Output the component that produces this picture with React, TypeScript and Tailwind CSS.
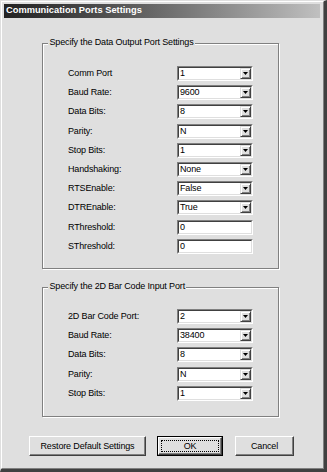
import React from "react";

const txt = "font-['Liberation_Sans',Arial,sans-serif] text-[9px] tracking-[-0.15px] text-black leading-none";

type Field = { label: string; value: string; kind?: "combo" | "text" };

const outputPort: Field[] = [
  { label: "Comm Port", value: "1" },
  { label: "Baud Rate:", value: "9600" },
  { label: "Data Bits:", value: "8" },
  { label: "Parity:", value: "N" },
  { label: "Stop Bits:", value: "1" },
  { label: "Handshaking:", value: "None" },
  { label: "RTSEnable:", value: "False" },
  { label: "DTREnable:", value: "True" },
  { label: "RThreshold:", value: "0", kind: "text" },
  { label: "SThreshold:", value: "0", kind: "text" },
];

const inputPort: Field[] = [
  { label: "2D Bar Code Port:", value: "2" },
  { label: "Baud Rate:", value: "38400" },
  { label: "Data Bits:", value: "8" },
  { label: "Parity:", value: "N" },
  { label: "Stop Bits:", value: "1" },
];

function Sunken({ value, combo }: { value: string; combo: boolean }) {
  return (
    <div className="flex h-[15px] w-[76px] border border-t-[#808080] border-l-[#808080] border-r-white border-b-white">
      <div className="flex flex-1 border border-t-[#404040] border-l-[#404040] border-r-[#dfdfdf] border-b-[#dfdfdf] bg-white">
        <span className={`${txt} flex flex-1 items-center pl-[1px]`}>{value}</span>
        {combo && (
          <div className="flex w-[11px] items-center justify-center border border-t-[#dfdfdf] border-l-[#dfdfdf] border-r-[#404040] border-b-[#404040] bg-[#dfdfdf] shadow-[inset_1px_1px_0_#fff,inset_-1px_-1px_0_#808080]">
            <svg width="5" height="3" viewBox="0 0 5 3">
              <polygon points="0,0 5,0 2.5,3" fill="#000" />
            </svg>
          </div>
        )}
      </div>
    </div>
  );
}

function GroupBox({ title, fields, height, padTop }: { title: string; fields: Field[]; height: string; padTop: string }) {
  return (
    <div
      className={`relative ml-[38px] w-[237px] ${height} border border-[#808080] shadow-[1px_1px_0_#fff,inset_1px_1px_0_#fff] ${padTop} pl-[25px]`}
    >
      <span className={`${txt} absolute left-[5px] -top-[6.5px] bg-[#dfdfdf] px-[1.5px] leading-[10px]`}>{title}</span>
      <div className="flex flex-col gap-[4.2px]">
        {fields.map((f, i) => (
          <div key={i} className="flex h-[15px] items-center">
            <span className={`${txt} w-[109px]`}>{f.label}</span>
            <Sunken value={f.value} combo={f.kind !== "text"} />
          </div>
        ))}
      </div>
    </div>
  );
}

function PushButton({ label, width, isDefault }: { label: string; width: string; isDefault?: boolean }) {
  if (isDefault) {
    return (
      <div className={`flex h-[20px] ${width} border border-black`}>
        <div className="flex flex-1 border border-t-white border-l-white border-r-[#404040] border-b-[#404040] bg-[#dfdfdf] p-[2px] shadow-[inset_-1px_-1px_0_#808080]">
          <div className={`${txt} flex flex-1 items-center justify-center border border-dotted border-black`}>{label}</div>
        </div>
      </div>
    );
  }
  return (
    <div
      className={`${txt} flex h-[20px] ${width} items-center justify-center border border-t-white border-l-white border-r-[#404040] border-b-[#404040] bg-[#dfdfdf] shadow-[inset_-1px_-1px_0_#808080]`}
    >
      {label}
    </div>
  );
}

export default function App() {
  return (
    <div className="h-[472px] w-[327px] border-t border-l border-t-[#dfdfdf] border-l-[#dfdfdf] border-r-[3px] border-b-[3px] border-r-[#404040] border-b-[#404040] bg-[#dfdfdf]">
      <div className="flex h-full flex-col border border-t-white border-l-white border-r-[#808080] border-b-[#808080] pl-[2px] pr-[3px] pt-[2px]">
        <div className="flex h-[14px] items-center bg-gradient-to-r from-[#222] to-[#c0c0c0] pl-[2px]">
          <span className="font-['Liberation_Sans',Arial,sans-serif] text-[9.3px] font-bold leading-none text-white">
            Communication Ports Settings
          </span>
        </div>

        <div className="mt-[25px]">
          <GroupBox title="Specify the Data Output Port Settings" fields={outputPort} height="h-[226px]" padTop="pt-[22px]" />
        </div>

        <div className="mt-[18px]">
          <GroupBox title="Specify the 2D Bar Code Input Port" fields={inputPort} height="h-[130px]" padTop="pt-[21px]" />
        </div>

        <div className="mt-[19px] ml-[25px] flex gap-[11px]">
          <PushButton label="Restore Default Settings" width="w-[117px]" />
          <PushButton label="OK" width="w-[66px]" isDefault />
          <div className="ml-[1px]">
            <PushButton label="Cancel" width="w-[59px]" />
          </div>
        </div>
      </div>
    </div>
  );
}
